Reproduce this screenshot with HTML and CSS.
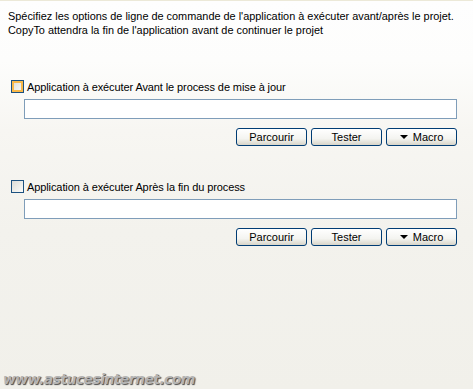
FILE: index.html
```html
<!DOCTYPE html>
<html lang="fr">
<head>
    <meta charset="UTF-8">
    <title>CopyTo - Options</title>
    <link rel="stylesheet" href="styles.css">
</head>
<body>
    <div class="panel">
        <p class="intro">Spécifiez les options de ligne de commande de l'application à exécuter avant/après le projet.<br>CopyTo attendra la fin de l'application avant de continuer le projet</p>

        <div class="group first">
            <label class="check-row">
                <span class="box hot"></span>
                Application à exécuter Avant le process de mise à jour
            </label>
            <input type="text" class="cmd">
            <div class="buttons">
                <button class="btn">Parcourir</button>
                <button class="btn">Tester</button>
                <button class="btn"><span class="arrow"></span>Macro</button>
            </div>
        </div>

        <div class="group second">
            <label class="check-row">
                <span class="box"></span>
                Application à exécuter Après la fin du process
            </label>
            <input type="text" class="cmd">
            <div class="buttons">
                <button class="btn">Parcourir</button>
                <button class="btn">Tester</button>
                <button class="btn"><span class="arrow"></span>Macro</button>
            </div>
        </div>

        <div class="watermark">www.astucesinternet.com</div>
    </div>
</body>
</html>
```

FILE: styles.css
```css
*{
    box-sizing: border-box;
    padding: 0;
    margin: 0;
}
html, body{
    width: 473px;
    height: 389px;
    overflow: hidden;
}
body{
    font-family: "Liberation Sans", sans-serif;
    font-size: 11px;
    color: #000;
}
.panel{
    height: 389px;
    display: flex;
    flex-direction: column;
    border-top: 1px solid #ece9d8;
    background: linear-gradient(to bottom, #fefefe 0px, #fdfdfc 60px, #f7f6f2 130px, #f3f2ed 230px, #f1f0ea 389px);
}
.intro{
    font-size: 10.9px;
    line-height: 14px;
    padding: 8px 0 0 8px;
}
.group{
    padding: 0 16px 0 11px;
}
.group.first{
    margin-top: 43px;
}
.group.second{
    margin-top: 34px;
}
.check-row{
    display: flex;
    align-items: center;
    gap: 3px;
    height: 13px;
    font-size: 11px;
    letter-spacing: -0.1px;
}
.box{
    width: 13px;
    height: 13px;
    border: 1px solid #1c5180;
    background: linear-gradient(135deg, #dcdcd7, #fbfbf9);
}
.box.hot{
    box-shadow: inset 0 0 0 2px #f9b94a;
}
.cmd{
    display: block;
    margin: 6px 0 0 13px;
    width: 433px;
    height: 20px;
    border: 1px solid #7f9db9;
    background: #fff;
}
.buttons{
    display: flex;
    justify-content: flex-end;
    gap: 4px;
    margin-top: 9px;
}
.btn{
    width: 71px;
    height: 18px;
    border: 1px solid #003c74;
    border-radius: 3px;
    background: linear-gradient(to bottom, #ffffff 0%, #f4f4f0 60%, #d8d5c9 100%);
    font-family: "Liberation Sans", sans-serif;
    font-size: 11px;
    color: #000;
    display: flex;
    align-items: center;
    justify-content: center;
    gap: 5px;
}
.arrow{
    width: 0;
    height: 0;
    border-left: 4px solid transparent;
    border-right: 4px solid transparent;
    border-top: 4px solid #000;
}
.watermark{
    margin-top: auto;
    padding: 0 0 2px 3px;
    font-family: "DejaVu Sans", sans-serif;
    font-weight: bold;
    font-style: italic;
    font-size: 14px;
    letter-spacing: -0.6px;
    color: #b4b4b4;
    text-shadow: 1px 1px 1px #4a4a4a;
}
```
